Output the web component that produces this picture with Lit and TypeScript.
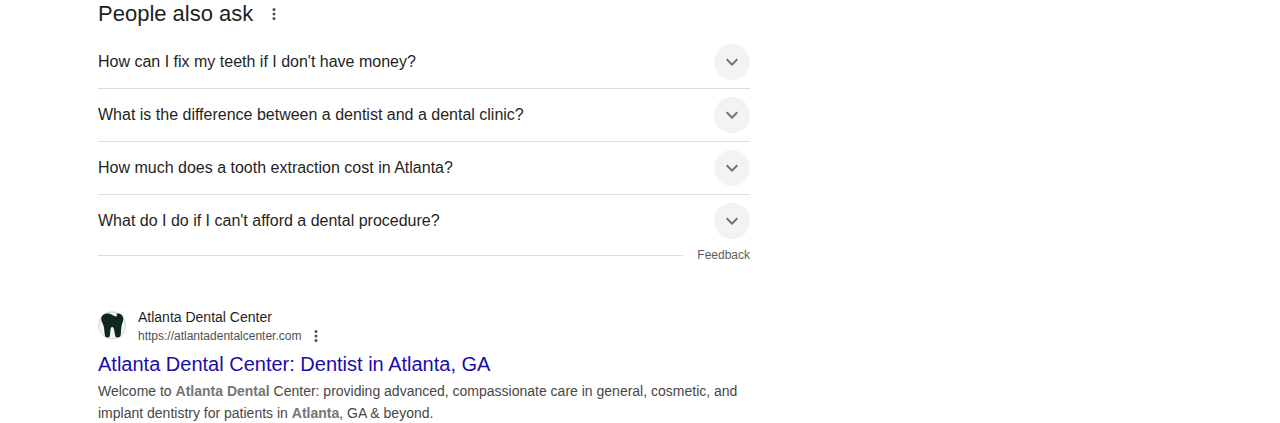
import { LitElement, html, css, svg } from "lit";
import { customElement, property, state } from "lit/decorators.js";

const QUESTIONS = [
  "How can I fix my teeth if I don't have money?",
  "What is the difference between a dentist and a dental clinic?",
  "How much does a tooth extraction cost in Atlanta?",
  "What do I do if I can't afford a dental procedure?",
];

const dots = svg`
  <circle cx="12" cy="6" r="2" />
  <circle cx="12" cy="12" r="2" />
  <circle cx="12" cy="18" r="2" />
`;

@customElement("more-button")
class MoreButton extends LitElement {
  @property() label = "";

  static styles = css`
    :host {
      display: inline-flex;
    }
    .more {
      display: flex;
      padding: 0;
      border: 0;
      background: none;
      cursor: pointer;
    }
    .icon {
      display: block;
      width: 18px;
      height: 18px;
      fill: #4d5156;
    }
  `;

  render() {
    return html`
      <button class="more" type="button" aria-label=${this.label}>
        <svg class="icon" viewBox="0 0 24 24" aria-hidden="true">${dots}</svg>
      </button>
    `;
  }
}

@customElement("related-question")
class RelatedQuestion extends LitElement {
  @property() question = "";
  @state() private open = false;

  static styles = css`
    :host {
      display: block;
    }
    .row {
      display: flex;
      align-items: center;
      justify-content: space-between;
      gap: 16px;
      width: 100%;
      padding: 8px 0;
      border: 0;
      background: none;
      color: #1f1f1f;
      font: inherit;
      font-size: 16px;
      line-height: 20px;
      text-align: left;
      cursor: pointer;
    }
    .disc {
      display: flex;
      flex: none;
      align-items: center;
      justify-content: center;
      width: 36px;
      height: 36px;
      border-radius: 50%;
      background: #f1f3f4;
    }
    .icon {
      width: 24px;
      height: 24px;
      fill: #70757a;
    }
    .row[aria-expanded="true"] .icon {
      transform: rotate(180deg);
    }
  `;

  render() {
    return html`
      <button
        class="row"
        type="button"
        aria-expanded=${this.open ? "true" : "false"}
        @click=${() => (this.open = !this.open)}
      >
        <span>${this.question}</span>
        <span class="disc">
          <svg class="icon" viewBox="0 0 24 24" aria-hidden="true">
            <path d="M16.59 8.59 12 13.17 7.41 8.59 6 10l6 6 6-6z" />
          </svg>
        </span>
      </button>
    `;
  }
}

@customElement("app-root")
class AppRoot extends LitElement {
  static styles = css`
    :host {
      display: block;
      font-family: "Liberation Sans", Arial, sans-serif;
      background: #fff;
      color: #1f1f1f;
    }
    .column {
      box-sizing: content-box;
      max-width: 652px;
      padding: 0 16px 0 98px;
    }
    .heading {
      display: flex;
      align-items: center;
      gap: 12px;
      margin-bottom: 8px;
    }
    .heading h2 {
      margin: 0;
      font-size: 22px;
      font-weight: 400;
      line-height: 28px;
    }
    .questions {
      margin: 0;
      padding: 0;
      list-style: none;
    }
    .questions li + li {
      border-top: 1px solid #dadce0;
    }
    .feedback {
      display: flex;
      align-items: center;
      gap: 14px;
      margin-bottom: 44px;
    }
    .rule {
      flex: 1;
      height: 1px;
      background: #dadce0;
    }
    .feedback a {
      color: #5e5e5e;
      font-size: 12px;
      line-height: 16px;
      text-decoration: none;
    }
    .source {
      display: flex;
      align-items: center;
      gap: 12px;
      margin-bottom: 6px;
    }
    .favicon {
      flex: none;
      width: 28px;
      height: 28px;
      overflow: visible;
    }
    .site {
      font-size: 14px;
      line-height: 20px;
    }
    .address {
      display: flex;
      align-items: center;
      gap: 6px;
      color: #4d5156;
      font-size: 12px;
      line-height: 18px;
    }
    .title {
      margin: 0 0 3px;
      font-size: 20px;
      font-weight: 400;
      line-height: 26px;
    }
    .title a {
      color: #1a0dab;
      text-decoration: none;
    }
    .title a:hover,
    .feedback a:hover {
      text-decoration: underline;
    }
    .snippet {
      margin: 0;
      color: #474747;
      font-size: 14px;
      line-height: 22px;
    }
    .snippet em {
      color: #767676;
      font-style: normal;
      font-weight: 700;
    }
  `;

  render() {
    return html`
      <main class="column">
        <section>
          <div class="heading">
            <h2>People also ask</h2>
            <more-button label="About this section"></more-button>
          </div>
          <ul class="questions">
            ${QUESTIONS.map(
              (q) => html`<li><related-question .question=${q}></related-question></li>`
            )}
          </ul>
          <div class="feedback">
            <span class="rule"></span>
            <a href="#feedback">Feedback</a>
          </div>
        </section>
        <article>
          <div class="source">
            <svg class="favicon" viewBox="0 0 28 28" aria-hidden="true">
              <circle cx="14" cy="13.3" r="13.5" fill="#f3f5f5" stroke="#d2d5d7" />
              <path
                fill="#10271f"
                d="M3.200 6.500C3.500 3.400 5.600 1.500 8.500 1.400c2.200-.1 4 .4 5.500 1.300l3.300 1.900 1.900-.7-.8-1.900c1-.5 2.200-.6 3.200-.3 2.400.7 3.700 2.700 3.700 5.200 0 2.600-1.300 4.500-1.800 7.300-.6 3.700-.3 7.300-1.100 10.100-.5 1.500-4.300 1.500-4.900.1-1.100-2.700-.8-5.700-1.700-7.900-.4-1.100-.9-1.600-1.600-1.600s-1.200.5-1.500 1.600c-.6 2.400-.3 5.300-1.100 7.900-.5 1.400-4 1.400-4.400-.1-.9-3-.7-6.700-1.500-10.100-.6-2.900-2.800-4.900-2.500-7.700z"
              />
            </svg>
            <div>
              <div class="site">Atlanta Dental Center</div>
              <div class="address">
                <span>https://atlantadentalcenter.com</span>
                <more-button label="About this result"></more-button>
              </div>
            </div>
          </div>
          <h3 class="title">
            <a href="https://atlantadentalcenter.com">Atlanta Dental Center: Dentist in Atlanta, GA</a>
          </h3>
          <p class="snippet">
            Welcome to <em>Atlanta Dental</em> Center: providing advanced, compassionate care in
            general, cosmetic, and implant dentistry for patients in <em>Atlanta</em>, GA &amp;
            beyond.
          </p>
        </article>
      </main>
    `;
  }
}
